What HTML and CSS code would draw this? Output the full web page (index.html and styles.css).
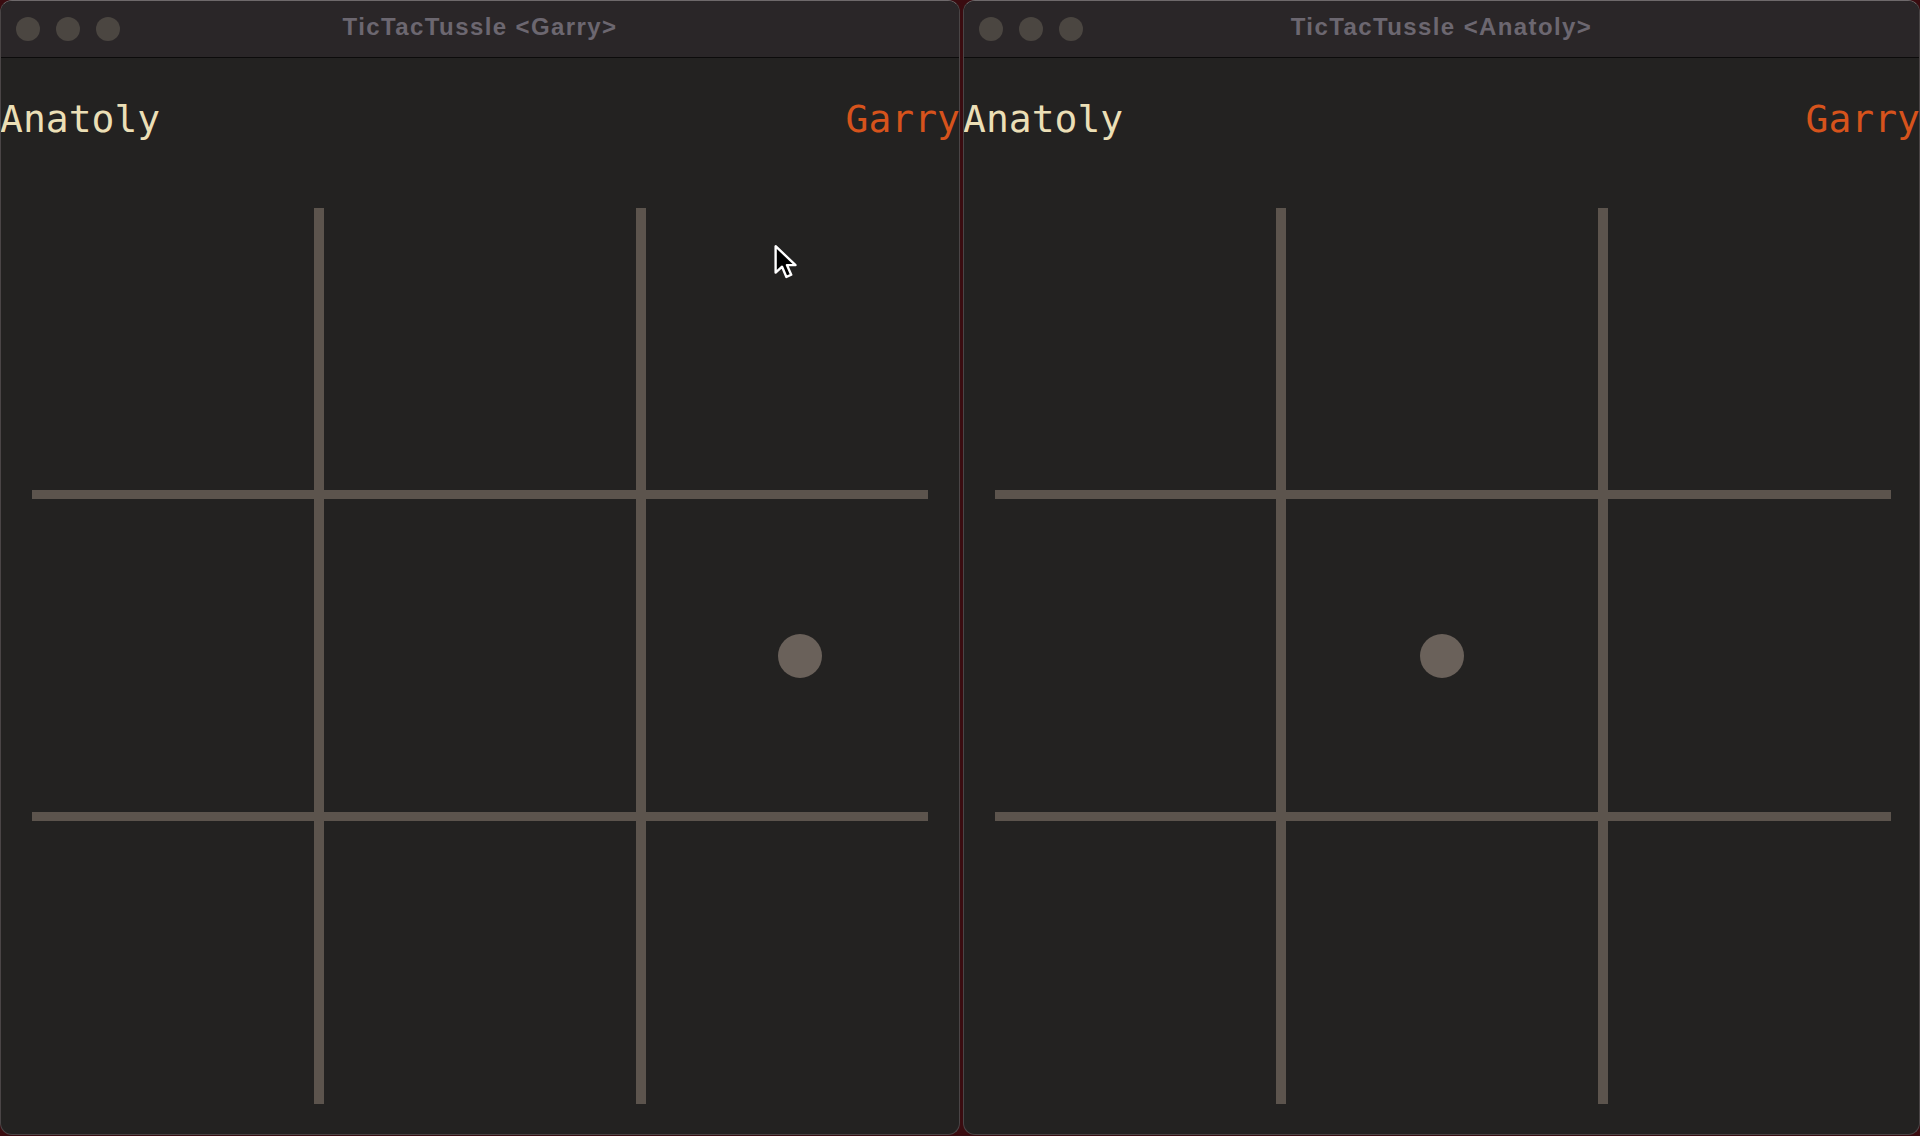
FILE: index.html
```html
<!DOCTYPE html>
<html>
<head>
<meta charset="utf-8">
<link rel="stylesheet" href="styles.css">
</head>
<body>
<div class="desktop">
  <div class="window">
    <div class="titlebar">
      <div class="lights"><span class="light"></span><span class="light"></span><span class="light"></span></div>
      <div class="title">TicTacTussle &lt;Garry&gt;</div>
    </div>
    <div class="content">
      <div class="names"><span class="me">Anatoly</span><span class="opp">Garry</span></div>
      <svg class="board" width="896" height="896" viewBox="0 0 896 896">
        <rect x="282" y="0" width="10" height="896" fill="#5c544d"/>
        <rect x="604" y="0" width="10" height="896" fill="#5c544d"/>
        <rect x="0" y="282" width="896" height="9" fill="#5c544d"/>
        <rect x="0" y="604" width="896" height="9" fill="#5c544d"/>
        <circle cx="768" cy="448" r="22" fill="#6a615a"/>
      </svg>
    </div>
    <svg class="cursor" width="28" height="40" viewBox="0 0 26 36">
      <path d="M1.5 1.5 L1.5 26 L7.5 20.5 L11.5 30 L16 28 L12 19 L20 19 Z" fill="#000" stroke="#fff" stroke-width="2.2" stroke-linejoin="round"/>
    </svg>
  </div>
  <div class="window">
    <div class="titlebar">
      <div class="lights"><span class="light"></span><span class="light"></span><span class="light"></span></div>
      <div class="title">TicTacTussle &lt;Anatoly&gt;</div>
    </div>
    <div class="content">
      <div class="names"><span class="me">Anatoly</span><span class="opp">Garry</span></div>
      <svg class="board" width="896" height="896" viewBox="0 0 896 896">
        <rect x="281" y="0" width="10" height="896" fill="#5c544d"/>
        <rect x="603" y="0" width="10" height="896" fill="#5c544d"/>
        <rect x="0" y="282" width="896" height="9" fill="#5c544d"/>
        <rect x="0" y="604" width="896" height="9" fill="#5c544d"/>
        <circle cx="447" cy="448" r="22" fill="#6a615a"/>
      </svg>
    </div>
  </div>
</div>
</body>
</html>
```
FILE: styles.css
```css
html, body {
  margin: 0;
  padding: 0;
  background: #3a0c10;
  overflow: hidden;
}
.desktop {
  display: grid;
  grid-template-columns: 960px 957px;
  column-gap: 3px;
  height: 1135px;
}
.window {
  position: relative;
  display: flex;
  flex-direction: column;
  background: #232221;
  border: 1px solid #4a4546;
  border-top-color: #6e696b;
  border-radius: 12px;
  overflow: hidden;
  box-sizing: border-box;
  height: 1135px;
}
.titlebar {
  position: relative;
  height: 56px;
  flex: none;
  background: #2a2628;
  border-bottom: 1px solid #0c0b0b;
  display: flex;
  align-items: center;
}
.lights {
  display: flex;
  gap: 16px;
  padding-left: 15px;
}
.light {
  width: 24px;
  height: 24px;
  border-radius: 50%;
  background: #4b4641;
}
.title {
  position: absolute;
  left: 0;
  right: 0;
  top: 12px;
  text-align: center;
  font-family: "Liberation Sans", Arial, sans-serif;
  font-weight: bold;
  font-size: 24px;
  letter-spacing: 1.4px;
  line-height: 28px;
  color: #6c6770;
}
.content {
  flex: 1;
  display: flex;
  flex-direction: column;
}
.names {
  display: flex;
  justify-content: space-between;
  padding-top: 39px;
  margin-left: -1px;
  margin-right: -1px;
  font-family: "DejaVu Sans Mono", monospace;
  font-size: 38px;
  line-height: 44px;
}
.me { color: #ebdfb6; }
.opp { color: #d6531c; }
.board {
  display: block;
  margin-top: 67px;
  margin-left: 31px;
}
.cursor {
  position: absolute;
  left: 773px;
  top: 243px;
}
```
